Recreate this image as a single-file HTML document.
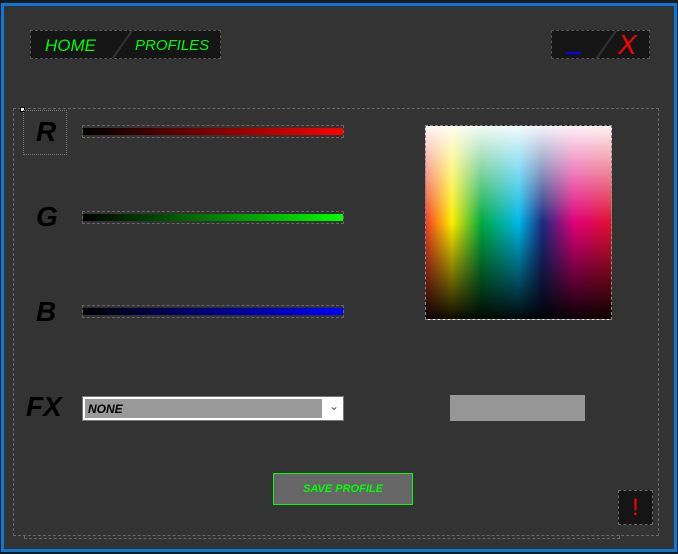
<!DOCTYPE html>
<html><head><style>
*{margin:0;padding:0;box-sizing:border-box}
body{width:678px;height:554px;background:#1a1a1a;position:relative;overflow:hidden;font-family:"Liberation Sans",sans-serif}
.win{position:absolute;left:1px;top:3px;width:676px;height:549px;background:#333;border:3px solid #0a78d7;border-top-width:3px}
.abs{position:absolute}
.nav{left:30px;top:30px;width:191px;height:29px;background:#151515;border:1px dashed #555;overflow:hidden}
.g{color:#0f0;font-style:italic;font-size:17px;position:absolute;top:5px;letter-spacing:0px}
.slash{position:absolute;width:2px;height:40px;background:#333;transform:rotate(35deg)}
.panel{left:13px;top:108px;width:646px;height:428px;border:1px dashed #666}
.bar{height:13px;border:1px dashed #666;padding:2px 0}
.bar div{height:100%}
.lbl{font-size:28px;font-style:italic;color:#000;font-weight:bold}
</style></head><body>
<div class="win"></div>
<div class="abs nav">
 <span class="g" style="left:14px">HOME</span>
 <div class="slash" style="left:90px;top:-6px"></div>
 <span class="g" style="left:104px;font-size:15px;top:6px">PROFILES</span>
</div>
<div class="abs nav" style="left:551px;width:99px">
 <div class="abs" style="left:14px;top:21px;width:15px;height:2px;background:#00f"></div>
 <div class="slash" style="left:53px;top:-6px"></div>
 <span class="abs" style="left:66px;top:-2px;color:#f00;font-size:28px;font-style:italic">X</span>
</div>
<div class="abs panel"></div>
<div class="abs" style="left:20px;top:107px;width:5px;height:5px;background:#fff;border:1px solid #000"></div>
<div class="abs" style="left:23px;top:110px;width:44px;height:45px;border:1px dotted #777"></div>
<span class="abs lbl" style="left:36px;top:116px">R</span>
<span class="abs lbl" style="left:36px;top:201px">G</span>
<span class="abs lbl" style="left:36px;top:296px">B</span>
<span class="abs lbl" style="left:26px;top:391px">FX</span>
<div class="abs bar" style="left:82px;top:125px;width:262px"><div style="background:linear-gradient(90deg,#000,#f00)"></div></div>
<div class="abs bar" style="left:82px;top:211px;width:262px"><div style="background:linear-gradient(90deg,#000,#0f0)"></div></div>
<div class="abs bar" style="left:82px;top:305px;width:262px"><div style="background:linear-gradient(90deg,#000,#00f)"></div></div>
<div class="abs" style="left:425px;top:125px;width:187px;height:195px;border:1px dashed #888;background:linear-gradient(180deg,rgba(255,255,255,.95) 0%,rgba(255,255,255,0) 50%,rgba(0,0,0,0) 50%,rgba(0,0,0,.95) 100%),linear-gradient(90deg,#f04020 0%,#ffee00 14%,#00aa40 30%,#00b8e8 50%,#1a2a80 63%,#e0007a 80%,#e01030 100%)"></div>
<div class="abs" style="left:82px;top:396px;width:262px;height:25px;background:#fff;border:1px solid #777;padding:2px">
 <div style="width:237px;height:19px;background:#999;font-size:12px;font-style:italic;font-weight:bold;color:#000;padding:3px 3px">NONE</div>
 <span class="abs" style="right:4px;top:2px;font-size:12px;color:#555">&#8964;</span>
</div>
<div class="abs" style="left:450px;top:395px;width:135px;height:26px;background:#969696"></div>
<div class="abs" style="left:273px;top:473px;width:140px;height:32px;background:#666;border:1px solid #0f0;color:#0f0;font-size:11px;font-style:italic;font-weight:bold;text-align:center;line-height:30px">SAVE PROFILE</div>
<div class="abs" style="left:618px;top:490px;width:35px;height:35px;background:#151515;border:1px dashed #666;color:#f00;font-size:24px;text-align:center;line-height:33px">!</div>
<div class="abs" style="left:24px;top:535px;width:596px;height:4px;border:1px dashed #666;border-top:none"></div>
</body></html>
